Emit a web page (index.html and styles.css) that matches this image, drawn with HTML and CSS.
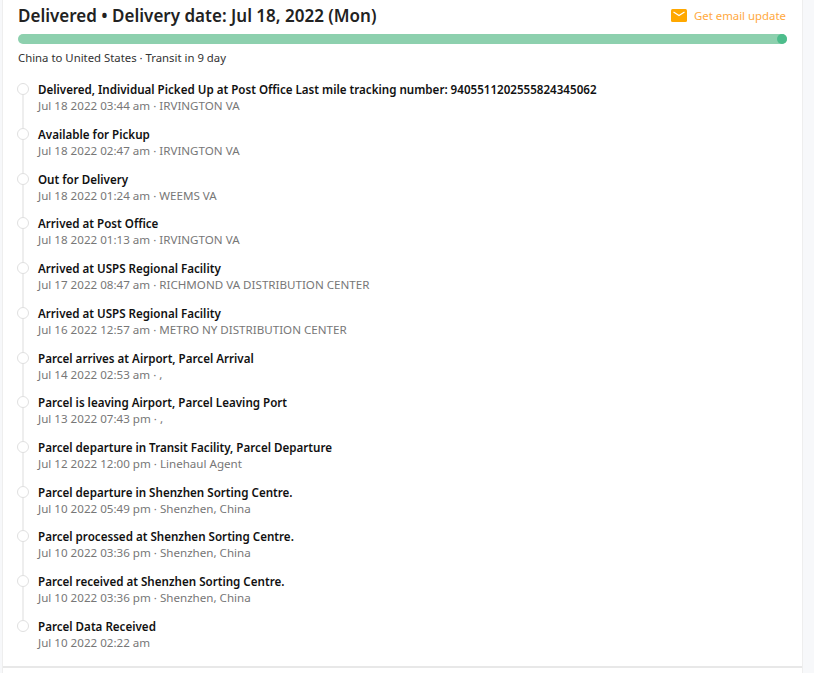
FILE: index.html
```html
<!DOCTYPE html>
<html lang="en">
<head>
<meta charset="UTF-8">
<meta name="viewport" content="width=device-width, initial-scale=1.0">
<title>Parcel Tracking</title>
<link rel="stylesheet" href="styles.css">
</head>
<body>

<div class="card">
  <div class="head">
    <h2>Delivered • Delivery date: Jul 18, 2022 (Mon)</h2>
    <a class="email-link">
      <svg class="mail-icon" width="16" height="13" viewBox="0 0 16 13">
        <rect width="16" height="13" rx="1.5" fill="#ffa800"/>
        <path d="M2.5 3 L8 6.5 L13.5 3" fill="none" stroke="#fff" stroke-width="1.2"/>
      </svg>
      Get email update
    </a>
  </div>
  <div class="progress"><span class="progress-dot"></span></div>
  <p class="route">China to United States · Transit in 9 day</p>

  <ul class="events">
    <li><b>Delivered, Individual Picked Up at Post Office Last mile tracking number: 9405511202555824345062</b><span>Jul 18 2022 03:44 am · IRVINGTON VA</span></li>
    <li><b>Available for Pickup</b><span>Jul 18 2022 02:47 am · IRVINGTON VA</span></li>
    <li><b>Out for Delivery</b><span>Jul 18 2022 01:24 am · WEEMS VA</span></li>
    <li><b>Arrived at Post Office</b><span>Jul 18 2022 01:13 am · IRVINGTON VA</span></li>
    <li><b>Arrived at USPS Regional Facility</b><span>Jul 17 2022 08:47 am · RICHMOND VA DISTRIBUTION CENTER</span></li>
    <li><b>Arrived at USPS Regional Facility</b><span>Jul 16 2022 12:57 am · METRO NY DISTRIBUTION CENTER</span></li>
    <li><b>Parcel arrives at Airport, Parcel Arrival</b><span>Jul 14 2022 02:53 am · ,</span></li>
    <li><b>Parcel is leaving Airport, Parcel Leaving Port</b><span>Jul 13 2022 07:43 pm · ,</span></li>
    <li><b>Parcel departure in Transit Facility, Parcel Departure</b><span>Jul 12 2022 12:00 pm · Linehaul Agent</span></li>
    <li><b>Parcel departure in Shenzhen Sorting Centre.</b><span>Jul 10 2022 05:49 pm · Shenzhen, China</span></li>
    <li><b>Parcel processed at Shenzhen Sorting Centre.</b><span>Jul 10 2022 03:36 pm · Shenzhen, China</span></li>
    <li><b>Parcel received at Shenzhen Sorting Centre.</b><span>Jul 10 2022 03:36 pm · Shenzhen, China</span></li>
    <li><b>Parcel Data Received</b><span>Jul 10 2022 02:22 am</span></li>
  </ul>
</div>

</body>
</html>
```

FILE: styles.css
```css
body {
  font-family: "Noto Sans", Arial, sans-serif;
  margin: 0;
  padding: 0;
  height: 673px;
  overflow: hidden;
  background-color: #f7f8fa;
}
.card {
  box-sizing: border-box;
  width: 801px;
  height: 673px;
  margin-left: 2px;
  background-color: #fff;
  border-left: 1px solid #eee;
  border-right: 1px solid #eee;
}
.head {
  display: flex;
  justify-content: space-between;
  align-items: center;
  box-sizing: border-box;
  height: 34px;
  padding: 0 16px 3px 15px;
}
h2 {
  margin: 0;
  font-size: 17px;
  font-weight: 600;
  color: #222;
}
.email-link {
  display: flex;
  align-items: center;
  gap: 7px;
  font-size: 11.4px;
  color: #ffa940;
}
.progress {
  position: relative;
  height: 10px;
  margin: 0 15px;
  border-radius: 5px;
  background-color: #8dd0ae;
}
.progress-dot {
  position: absolute;
  right: 0;
  top: 0;
  width: 10px;
  height: 10px;
  border-radius: 50%;
  background-color: #4dbd8c;
}
.route {
  margin: 5px 15px 0;
  font-size: 11.35px;
  line-height: 18px;
  color: #333;
}
.events {
  list-style: none;
  box-sizing: border-box;
  height: 586px;
  margin: 15.4px 0 0;
  padding: 0 15px;
  border-bottom: 2px solid #e8e8e8;
}
.events li {
  position: relative;
  height: 44.7px;
  padding-left: 20px;
  font-size: 11.6px;
  line-height: 16px;
}
.events li::before {
  content: "";
  position: absolute;
  left: -1px;
  top: 1px;
  width: 10px;
  height: 10px;
  border: 1px solid #e0e0e0;
  border-radius: 50%;
  background-color: #fff;
  z-index: 1;
}
.events li::after {
  content: "";
  position: absolute;
  left: 4px;
  top: 1px;
  width: 2px;
  height: 44.7px;
  background-color: #eee;
}
.events li:last-child::after {
  display: none;
}
.events b {
  display: block;
  font-weight: 600;
  color: #111;
}
.events span {
  display: block;
  color: #777;
}
```
